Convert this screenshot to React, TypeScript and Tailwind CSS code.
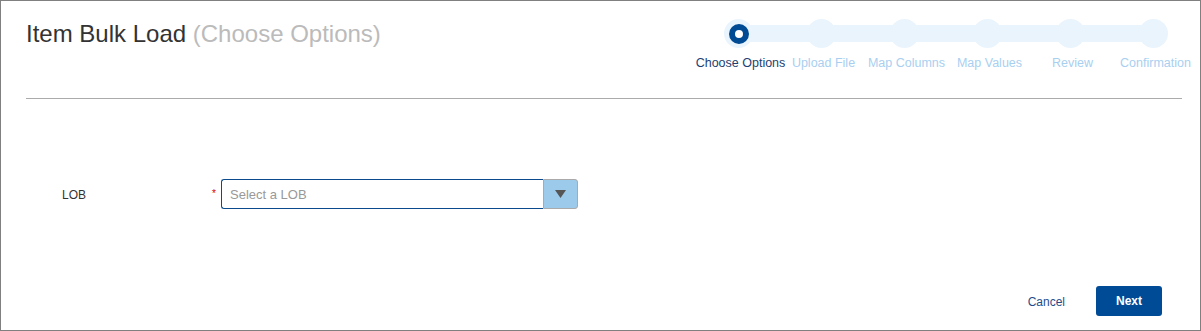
import React from "react";

const steps = ["Choose Options", "Upload File", "Map Columns", "Map Values", "Review", "Confirmation"];

function Stepper({ current = 0 }: { current?: number }) {
  return (
    <div className="relative w-[498px]">
      {/* track behind the dots */}
      <div className="absolute left-[42px] right-[42px] top-[6px] h-[17px] bg-[#eaf4fd]" />
      <div className="relative grid grid-cols-6">
        {steps.map((label, idx) => (
          <div key={label} className="flex flex-col items-center">
            <div className="w-[29px] h-[29px] rounded-full bg-[#eaf4fd] flex items-center justify-center">
              {idx === current && (
                <div className="w-[20px] h-[20px] rounded-full border-[6px] border-[#004b93] bg-white" />
              )}
            </div>
            <div
              className={
                "mt-[8px] ml-[4px] whitespace-nowrap text-[12.5px] leading-[15px] " +
                (idx === current ? "text-[#1d3f72]" : "text-[#a9cff0]")
              }
            >
              {label}
            </div>
          </div>
        ))}
      </div>
    </div>
  );
}

export default function App() {
  return (
    <div
      className="w-[1201px] h-[331px] border border-[#808080] bg-white flex flex-col"
      style={{ fontFamily: '"Liberation Sans", Arial, sans-serif' }}
    >
      {/* Header */}
      <div className="flex justify-between pl-[25px] pr-[5px] pt-[18px] h-[97px]">
        <h1 className="text-[24px] leading-[28px] pt-[1px] text-[#333]">
          Item Bulk Load <span className="text-[#bbbbbb]">(Choose Options)</span>
        </h1>
        <Stepper current={0} />
      </div>
      <div className="ml-[25px] mr-[18px] h-px bg-[#ababab]" />

      {/* Form */}
      <div className="flex-1">
        <div className="flex items-center pl-[61px] mt-[80px]">
          <label className="w-[150px] pt-[2px] text-[12px] text-[#333]">LOB</label>
          <span className="w-[9px] text-[10px] leading-none text-[#d40000]">*</span>
          <div className="flex w-[357px] h-[30px]">
            <div className="flex-1 flex items-center pl-[8px] pt-[1px] border border-r-0 border-[#0b4a8d] rounded-l-[3px] text-[13px] text-[#999]">
              Select a LOB
            </div>
            <button
              type="button"
              className="w-[35px] h-full flex items-center justify-center bg-[#9ccaeb] border border-[#aaaaaa] rounded-r-[3px]"
            >
              <svg width="11" height="8" viewBox="0 0 11 8">
                <path d="M0 0 H11 L5.5 8 Z" fill="#555" />
              </svg>
            </button>
          </div>
        </div>
      </div>

      {/* Footer */}
      <div className="flex justify-end items-center gap-[31px] pr-[38px] pb-[14px]">
        <button type="button" className="pt-[1px] text-[12px] text-[#1f4c8c]">
          Cancel
        </button>
        <button
          type="button"
          className="w-[66px] h-[30px] rounded-[3px] bg-[#004b96] text-white text-[12px] font-bold"
        >
          Next
        </button>
      </div>
    </div>
  );
}
